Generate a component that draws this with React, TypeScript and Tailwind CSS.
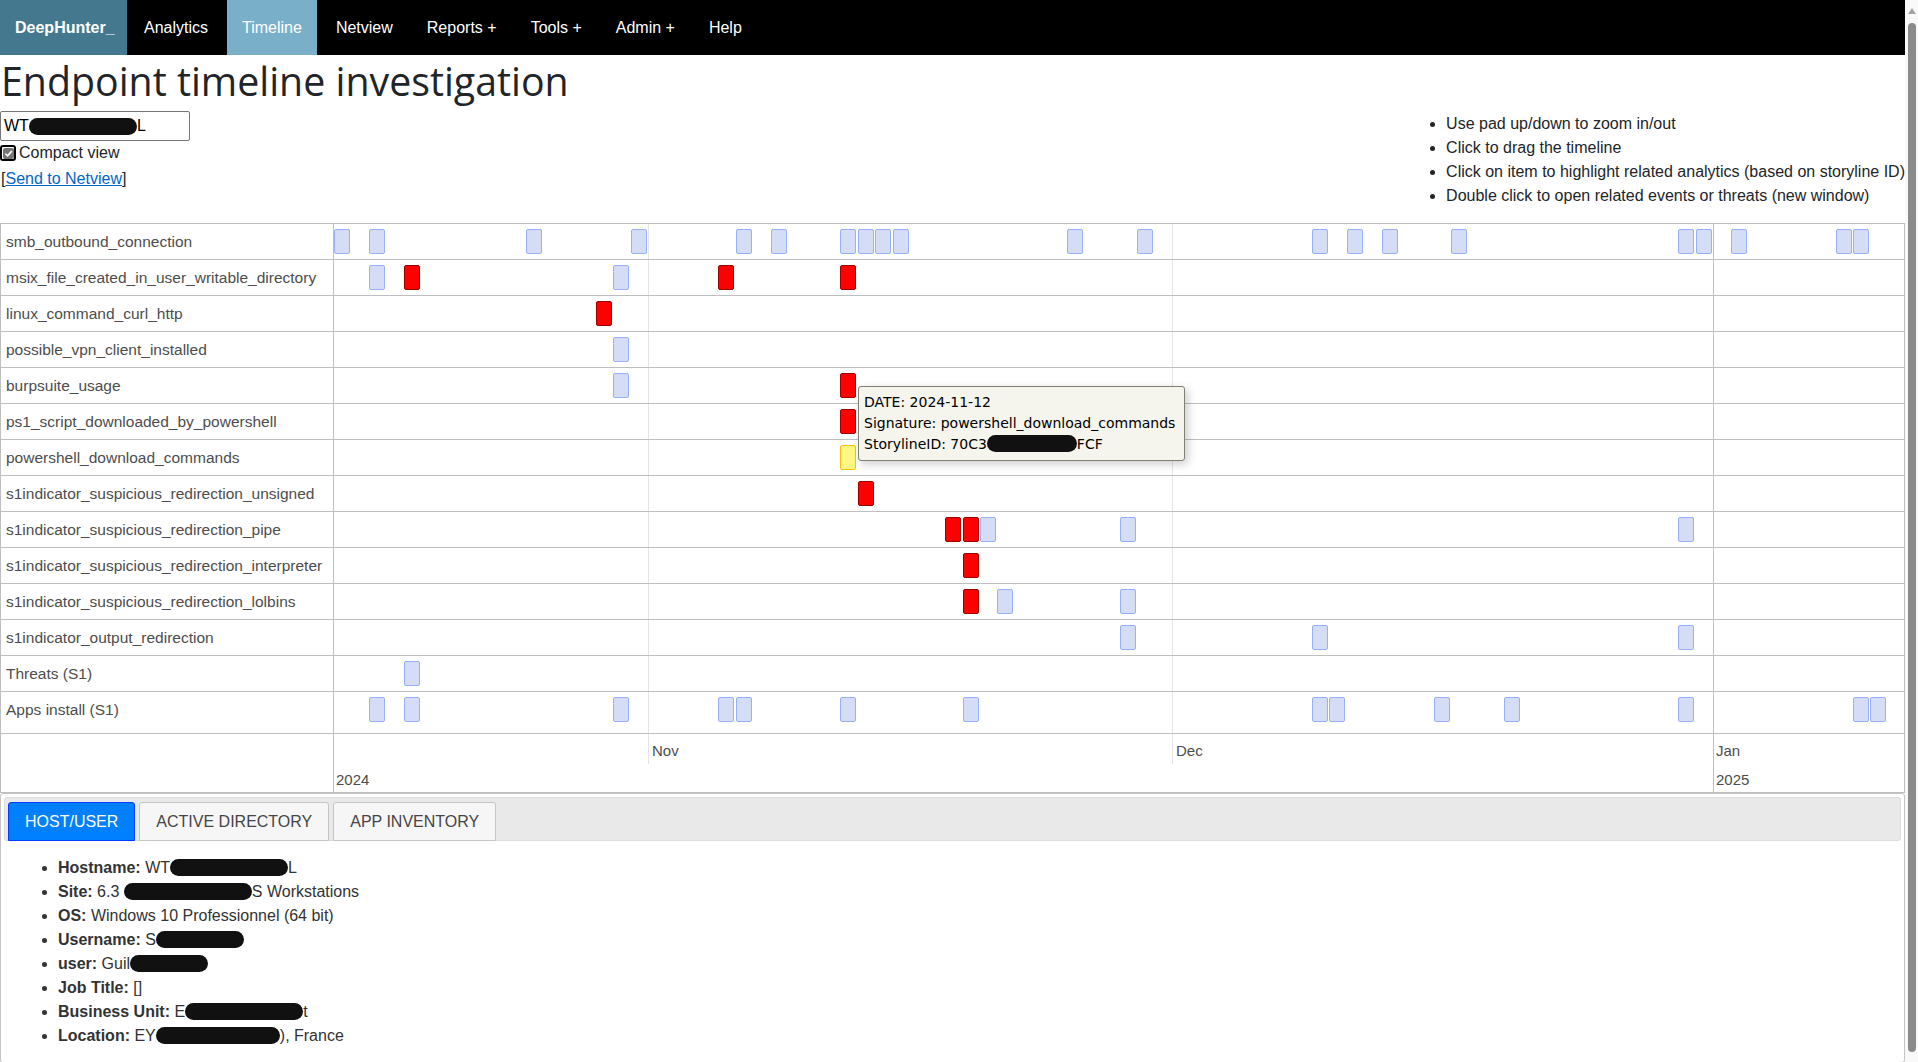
import React from 'react';

const DAY = 17.46;

type Kind = 'b' | 'r' | 'y';
type Row = { label: string; items: [number, Kind][]; tall?: boolean };

const blue = (...days: number[]): [number, Kind][] => days.map((d) => [d, 'b']);

const rows: Row[] = [
  { label: 'smb_outbound_connection', items: blue(0, 2, 11, 17, 23, 25, 29, 30, 31, 32, 42, 46, 56, 58, 60, 64, 77, 78, 80, 86, 87) },
  { label: 'msix_file_created_in_user_writable_directory', items: [[2, 'b'], [4, 'r'], [16, 'b'], [22, 'r'], [29, 'r']] },
  { label: 'linux_command_curl_http', items: [[15, 'r']] },
  { label: 'possible_vpn_client_installed', items: [[16, 'b']] },
  { label: 'burpsuite_usage', items: [[16, 'b'], [29, 'r']] },
  { label: 'ps1_script_downloaded_by_powershell', items: [[29, 'r']] },
  { label: 'powershell_download_commands', items: [[29, 'y']] },
  { label: 's1indicator_suspicious_redirection_unsigned', items: [[30, 'r']] },
  { label: 's1indicator_suspicious_redirection_pipe', items: [[35, 'r'], [36, 'r'], [37, 'b'], [45, 'b'], [77, 'b']] },
  { label: 's1indicator_suspicious_redirection_interpreter', items: [[36, 'r']] },
  { label: 's1indicator_suspicious_redirection_lolbins', items: [[36, 'r'], [38, 'b'], [45, 'b']] },
  { label: 's1indicator_output_redirection', items: blue(45, 56, 77) },
  { label: 'Threats (S1)', items: blue(4) },
  { label: 'Apps install (S1)', items: blue(2, 4, 16, 22, 23, 29, 36, 56, 57, 63, 67, 77, 87, 88), tall: true },
];

const kindClass: Record<Kind, string> = {
  b: 'bg-[#d5ddf6] border-[#97b0f8]',
  r: 'bg-[#ff0000] border-[#a00000]',
  y: 'bg-[#fff785] border-[#ffc200]',
};

// black marker over redacted text
function Blot({ w }: { w: string }) {
  return <span className={`inline-block h-[17px] align-[-3px] rounded-full bg-[#111] ${w}`} />;
}

function NavBar() {
  const links = ['Analytics', 'Timeline', 'Netview', 'Reports +', 'Tools +', 'Admin +', 'Help'];
  return (
    <nav className="flex h-[55px] bg-black pt-[1px] text-[16px] text-white">
      <div className="-mt-px flex w-[127px] items-center bg-[#44788f] pl-[15px] pt-px font-bold">DeepHunter_</div>
      <div className="-mt-px ml-[2px] flex gap-[4px]">
        {links.map((l) => (
          <a
            key={l}
            className={
              l === 'Timeline'
                ? 'flex items-center bg-[#7aafca] px-[15px] pt-px'
                : 'flex items-center px-[15px] pt-px'
            }
          >
            {l}
          </a>
        ))}
      </div>
    </nav>
  );
}

function Timeline() {
  return (
    <div className="relative flex border border-[#bfbfbf] text-[16px] text-[#4d4d4d]">
      <div className="w-[333px] shrink-0 border-r border-[#bfbfbf] text-[15.5px]">
        {rows.map((r) => (
          <div
            key={r.label}
            className={`flex items-center border-b border-[#bfbfbf] pl-[5px] ${r.tall ? 'h-[42px] pb-[6px]' : 'h-[36px]'}`}
          >
            {r.label}
          </div>
        ))}
        <div className="h-[58px]" />
      </div>

      <div className="relative flex-1">
        <div className="absolute left-[314px] top-0 h-[540px] w-px bg-[#e5e5e5]" />
        <div className="absolute left-[838px] top-0 h-[540px] w-px bg-[#e5e5e5]" />
        <div className="absolute bottom-0 left-[1379px] top-0 w-px bg-[#bfbfbf]" />

        {rows.map((r) => (
          <div
            key={r.label}
            className={`relative border-b border-[#bfbfbf] ${r.tall ? 'h-[42px]' : 'h-[36px]'}`}
          >
            {r.items.map(([d, k], i) => (
              <div
                key={i}
                className={`absolute top-[5px] h-[25px] w-[16px] rounded-[2px] border ${kindClass[k]}`}
                style={{ left: d * DAY }}
              />
            ))}
          </div>
        ))}

        <div className="relative h-[58px] text-[15px]">
          <span className="absolute left-[318px] top-[6px]">Nov</span>
          <span className="absolute left-[842px] top-[6px]">Dec</span>
          <span className="absolute left-[1382px] top-[6px]">Jan</span>
          <span className="absolute left-[2px] top-[35px]">2024</span>
          <span className="absolute left-[1382px] top-[35px]">2025</span>
        </div>
      </div>

      <div className="absolute left-[857px] top-[162px] w-[327px] rounded-[3px] border border-[#808074] bg-[#f5f4ed] p-[5px] font-['DejaVu_Sans',Verdana,sans-serif] text-[14px] leading-[21px] text-black shadow-[3px_3px_10px_rgba(0,0,0,0.2)]">
        <div>DATE: 2024-11-12</div>
        <div>Signature: powershell_download_commands</div>
        <div>
          StorylineID: 70C3<Blot w="w-[90px]" />FCF
        </div>
      </div>
    </div>
  );
}

function HostTabs() {
  const tabs = ['HOST/USER', 'ACTIVE DIRECTORY', 'APP INVENTORY'];
  return (
    <div className="h-[270px] rounded-[3px] border border-[#c5c5c5] p-[3px] text-[16px] text-[#333]">
      <div className="flex gap-[4px] rounded-[3px] border border-[#dddddd] bg-[#e9e9e9] pl-[3px] pt-[4px]">
        {tabs.map((t, i) => (
          <div
            key={t}
            className={
              i === 0
                ? 'flex h-[39px] -mb-px items-center rounded-t-[3px] border border-[#003eff] bg-[#007fff] px-[16px] text-white'
                : 'flex h-[39px] -mb-px items-center rounded-t-[3px] border border-[#c5c5c5] bg-[#f6f6f6] px-[16px] text-[#454545]'
            }
          >
            {t}
          </div>
        ))}
      </div>
      <ul className="mt-[15px] list-disc pl-[54px] leading-[24px]">
        <li><b>Hostname:</b> WT<Blot w="w-[118px]" />L</li>
        <li><b>Site:</b> 6.3 <Blot w="w-[128px]" />S Workstations</li>
        <li><b>OS:</b> Windows 10 Professionnel (64 bit)</li>
        <li><b>Username:</b> S<Blot w="w-[88px]" /></li>
        <li><b>user:</b> Guil<Blot w="w-[78px]" /></li>
        <li><b>Job Title:</b> []</li>
        <li><b>Business Unit:</b> E<Blot w="w-[118px]" />t</li>
        <li><b>Location:</b> EY<Blot w="w-[124px]" />), France</li>
      </ul>
    </div>
  );
}

export default function App() {
  return (
    <div className="flex h-[1062px] overflow-hidden bg-white font-['Liberation_Sans',Arial,sans-serif] text-[#212529]">
      <div className="w-[1905px] shrink-0">
        <NavBar />
        <h1 className="mt-[3px] pl-[1px] font-['Open_Sans',sans-serif] text-[39.3px] font-medium leading-[46px] text-[#212529]">
          Endpoint timeline investigation
        </h1>

        <div className="mt-[7px] flex h-[112px] items-start justify-between text-[16px]">
          <div>
            <div className="flex h-[30px] w-[190px] items-center rounded-[2px] border border-[#767676] px-[3px] text-black">
              WT<Blot w="w-[108px]" />L
            </div>
            <label className="mt-[2px] flex h-[20px] items-center gap-[3px]">
              <span className="flex h-[16px] w-[16px] items-center justify-center rounded-[3px] border-2 border-black">
                <span className="flex h-[11px] w-[11px] items-center justify-center rounded-[2px] bg-[#767676]">
                  <svg viewBox="0 0 10 10" className="h-[9px] w-[9px]">
                    <path d="M1.5 5.2 L4 7.6 L8.6 2.4" fill="none" stroke="white" strokeWidth="1.8" />
                  </svg>
                </span>
              </span>
              Compact view
            </label>
            <div className="mt-[4px] pl-[1px] leading-[24px]">
              [<a className="text-[#0066cc] underline">Send to Netview</a>]
            </div>
          </div>
          <ul className="list-disc pt-[1px] leading-[24px]">
            <li>Use pad up/down to zoom in/out</li>
            <li>Click to drag the timeline</li>
            <li>Click on item to highlight related analytics (based on storyline ID)</li>
            <li>Double click to open related events or threats (new window)</li>
          </ul>
        </div>

        <Timeline />
        <HostTabs />
      </div>

      <div className="flex w-[13px] shrink-0 flex-col items-center bg-[#f9f9f9]">
        <svg viewBox="0 0 8 6" className="mt-[8px] h-[6px] w-[8px]">
          <path d="M4 0 L8 6 L0 6 Z" fill="#a3a3a3" />
        </svg>
        <div className="mb-[10px] mt-[9px] w-[8px] flex-1 rounded-full bg-[#8b8b8b]" />
      </div>
    </div>
  );
}
